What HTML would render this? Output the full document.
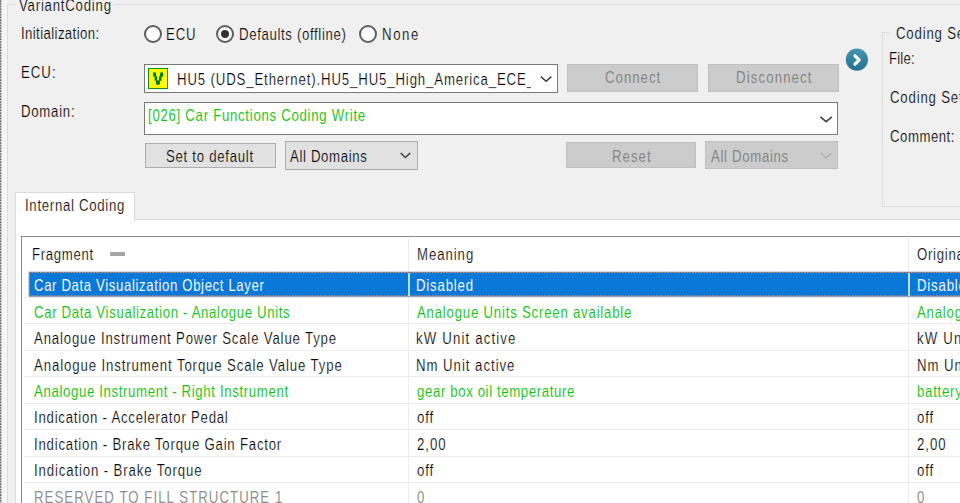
<!DOCTYPE html>
<html><head><meta charset="utf-8">
<style>
html,body{margin:0;padding:0}
body{width:960px;height:503px;overflow:hidden;background:#f0f0f0;position:relative;font-family:"Liberation Sans",sans-serif}
.a{position:absolute;box-sizing:border-box}
.t{position:absolute;font-size:16.5px;line-height:20px;white-space:nowrap;transform-origin:0 0}
.radio{position:absolute;box-sizing:border-box;width:18px;height:18px;border-radius:50%;border:2px solid #5e5e5e;background:#fff}
.chev{position:absolute}
</style></head><body>
<!-- left dotted border -->
<svg class="a" style="left:0;top:0" width="2" height="503"><defs><pattern id="dots" patternUnits="userSpaceOnUse" width="2" height="2.73"><rect x="0" y="0" width="2" height="2.73" fill="#d8d8d8"/><rect x="0" y="0.4" width="1.7" height="1.4" fill="#505050"/></pattern></defs><rect x="0" y="0" width="1.7" height="503" fill="url(#dots)"/><rect x="1.7" y="0" width="0.3" height="503" fill="#f5f5f5"/></svg>
<div class="a" style="left:1.6px;top:0;width:5.5px;height:503px;background:#f5f5f5"></div>
<!-- VariantCoding groupbox -->
<div class="a" style="left:6.5px;top:4.4px;width:1000px;height:600px;border:1px solid #dcdcdc"></div>
<div class="a" style="left:16px;top:0;width:98px;height:14px;background:#f0f0f0"></div>
<!-- radios -->
<div class="radio" style="left:143.5px;top:25px"></div>
<div class="radio" style="left:215.9px;top:25px"><div class="a" style="left:2.7px;top:2.7px;width:8.6px;height:8.6px;border-radius:50%;background:#333"></div></div>
<div class="radio" style="left:359.35px;top:25px"></div>
<!-- ECU combo -->
<div class="a" style="left:144px;top:64px;width:414px;height:29px;border:1px solid #7a7a7a;background:#fff"></div>
<div class="a" style="left:147.9px;top:68.2px;width:20.4px;height:20.5px;border:1.6px solid #109010;background:#ffff00"></div>
<svg class="a" style="left:144px;top:64px" width="30" height="30" viewBox="144 64 30 30"><g fill="#007800"><rect x="153.1" y="72.5" width="3" height="4.2"/><rect x="154.6" y="76.3" width="2.6" height="4.5"/><rect x="156" y="80.4" width="3.8" height="4.3"/><rect x="159" y="76.3" width="2.5" height="4.5"/><rect x="160.1" y="72.5" width="3" height="4.2"/></g></svg>
<!-- Connect / Disconnect -->
<div class="a" style="left:567px;top:64px;width:131px;height:27.5px;border:1px solid #bfbfbf;background:#cccccc"></div>
<div class="a" style="left:708px;top:64px;width:130.5px;height:27.5px;border:1px solid #bfbfbf;background:#cccccc"></div>
<!-- blue circle -->
<svg class="a" style="left:845px;top:48px" width="24" height="24" viewBox="0 0 24 24">
<defs><linearGradient id="bg1" x1="0" y1="0" x2="0" y2="1"><stop offset="0" stop-color="#4696b0"/><stop offset="1" stop-color="#23708e"/></linearGradient></defs>
<circle cx="11.9" cy="11.6" r="11.1" fill="url(#bg1)"/>
<path d="M10 7.8 L14.2 11.9 L10 16.2" fill="none" stroke="#fff" stroke-width="3.2" stroke-linecap="round" stroke-linejoin="round"/>
</svg>
<!-- Coding Set groupbox -->
<div class="a" style="left:882px;top:32px;width:200px;height:175px;border:1px solid #dcdcdc"></div>
<div class="a" style="left:891px;top:24px;width:100px;height:16px;background:#f0f0f0"></div>
<!-- Domain combo -->
<div class="a" style="left:144px;top:102px;width:694px;height:33px;border:1px solid #7a7a7a;background:#fff"></div>
<!-- Set to default -->
<div class="a" style="left:145px;top:142.5px;width:131px;height:25.5px;border:1px solid #adadad;background:#e1e1e1"></div>
<!-- All Domains combo -->
<div class="a" style="left:284.5px;top:141.2px;width:133.5px;height:28.5px;border:1px solid #adadad;background:#e1e1e1"></div>
<!-- Reset -->
<div class="a" style="left:565.6px;top:142.2px;width:130.6px;height:26px;border:1px solid #bfbfbf;background:#cccccc"></div>
<!-- All Domains 2 -->
<div class="a" style="left:705.3px;top:140.6px;width:132.8px;height:28.8px;border:1px solid #bfbfbf;background:#cccccc"></div>
<!-- Tab panel -->
<div class="a" style="left:14.5px;top:219.2px;width:1000px;height:400px;border:1px solid #d9d9d9;background:#fff"></div>
<div class="a" style="left:14.5px;top:191.7px;width:120px;height:29px;border:1px solid #d9d9d9;border-bottom:none;background:#fff"></div>
<!-- grid -->
<div class="a" style="left:21px;top:235.5px;width:1000px;height:400px;border:1.5px solid #868a92;border-right:none;border-bottom:none;background:#fff"></div>
<div class="a" style="left:408px;top:239px;width:1px;height:264px;background:#ececec"></div>
<div class="a" style="left:908px;top:239px;width:1px;height:264px;background:#ececec"></div>
<div class="a" style="left:110.2px;top:252px;width:15px;height:4.4px;background:#a6a6a6"></div>
<div class="a" style="left:24px;top:297.00px;width:940px;height:1px;background:#ececec"></div>
<div class="a" style="left:24px;top:323.43px;width:940px;height:1px;background:#ececec"></div>
<div class="a" style="left:24px;top:349.86px;width:940px;height:1px;background:#ececec"></div>
<div class="a" style="left:24px;top:376.29px;width:940px;height:1px;background:#ececec"></div>
<div class="a" style="left:24px;top:402.72px;width:940px;height:1px;background:#ececec"></div>
<div class="a" style="left:24px;top:429.15px;width:940px;height:1px;background:#ececec"></div>
<div class="a" style="left:24px;top:455.58px;width:940px;height:1px;background:#ececec"></div>
<div class="a" style="left:24px;top:482.01px;width:940px;height:1px;background:#ececec"></div>
<!-- selected row -->
<svg class="a" style="left:0;top:0" width="960" height="503"><defs>
<pattern id="dh" patternUnits="userSpaceOnUse" x="28.75" y="0" width="2.8" height="4"><rect x="0" y="0" width="1.5" height="4" fill="#e8905a"/></pattern>
<pattern id="dv" patternUnits="userSpaceOnUse" x="0" y="271.8" width="4" height="2.8"><rect x="0" y="0" width="4" height="1.5" fill="#e8905a"/></pattern></defs>
<rect x="28.75" y="271.8" width="940" height="24.8" fill="#0a78d7"/>
<rect x="28.75" y="271.8" width="940" height="1.3" fill="url(#dh)"/>
<rect x="28.75" y="295.3" width="940" height="1.3" fill="url(#dh)"/>
<rect x="28.75" y="271.8" width="1.3" height="24.8" fill="url(#dv)"/>
</svg>
<div class="a" style="left:408.3px;top:273px;width:1.5px;height:22.5px;background:#c0dcf4"></div>
<div class="a" style="left:908.3px;top:273px;width:1.5px;height:22.5px;background:#c0dcf4"></div>
<div class="t" style="left:19.40px;top:-5.12px;color:#000;transform:scaleX(0.8);letter-spacing:0.971px;-webkit-text-stroke:0.22px #f0f0f0;">VariantCoding</div>
<div class="t" style="left:21.10px;top:23.03px;color:#000;transform:scaleX(0.8);letter-spacing:0.489px;-webkit-text-stroke:0.22px #f0f0f0;">Initialization:</div>
<div class="t" style="left:20.90px;top:61.58px;color:#000;transform:scaleX(0.8);letter-spacing:1.263px;-webkit-text-stroke:0.22px #f0f0f0;">ECU:</div>
<div class="t" style="left:20.90px;top:100.78px;color:#000;transform:scaleX(0.8);letter-spacing:0.920px;-webkit-text-stroke:0.22px #f0f0f0;">Domain:</div>
<div class="t" style="left:166.10px;top:23.88px;color:#000;transform:scaleX(0.8);letter-spacing:1.102px;-webkit-text-stroke:0.22px #f0f0f0;">ECU</div>
<div class="t" style="left:238.50px;top:23.98px;color:#000;transform:scaleX(0.8);letter-spacing:0.811px;-webkit-text-stroke:0.22px #f0f0f0;">Defaults (offline)</div>
<div class="t" style="left:381.80px;top:23.98px;color:#000;transform:scaleX(0.8);letter-spacing:1.994px;-webkit-text-stroke:0.22px #f0f0f0;">None</div>
<div class="t" style="left:176.70px;top:68.98px;color:#000;transform:scaleX(0.8);letter-spacing:1.080px;-webkit-text-stroke:0.22px #fff;">HU5 (UDS_Ethernet).HU5_HU5_High_America_ECE_</div>
<div class="t" style="left:605.30px;top:67.18px;color:#838383;transform:scaleX(0.8);letter-spacing:1.251px;-webkit-text-stroke:0.08px #cccccc;">Connect</div>
<div class="t" style="left:735.70px;top:67.18px;color:#838383;transform:scaleX(0.8);letter-spacing:1.412px;-webkit-text-stroke:0.08px #cccccc;">Disconnect</div>
<div class="t" style="left:895.50px;top:23.08px;color:#000;transform:scaleX(0.8);letter-spacing:1.026px;-webkit-text-stroke:0.22px #f0f0f0;">Coding Set</div>
<div class="t" style="left:889.10px;top:48.18px;color:#000;transform:scaleX(0.8);letter-spacing:0.228px;-webkit-text-stroke:0.22px #f0f0f0;">File:</div>
<div class="t" style="left:889.50px;top:87.08px;color:#000;transform:scaleX(0.8);letter-spacing:1.026px;-webkit-text-stroke:0.22px #f0f0f0;">Coding Set</div>
<div class="t" style="left:889.50px;top:126.08px;color:#000;transform:scaleX(0.8);letter-spacing:0.640px;-webkit-text-stroke:0.22px #f0f0f0;">Comment:</div>
<div class="t" style="left:147.95px;top:105.28px;color:#14c214;transform:scaleX(0.8);letter-spacing:0.898px;-webkit-text-stroke:0.08px #fff;">[026] Car Functions Coding Write</div>
<div class="t" style="left:166.25px;top:146.03px;color:#000;transform:scaleX(0.8);letter-spacing:0.902px;-webkit-text-stroke:0.22px #e1e1e1;">Set to default</div>
<div class="t" style="left:290.00px;top:145.98px;color:#000;transform:scaleX(0.8);letter-spacing:0.810px;-webkit-text-stroke:0.22px #e1e1e1;">All Domains</div>
<div class="t" style="left:611.70px;top:145.98px;color:#838383;transform:scaleX(0.8);letter-spacing:1.277px;-webkit-text-stroke:0.08px #cccccc;">Reset</div>
<div class="t" style="left:710.60px;top:145.98px;color:#838383;transform:scaleX(0.8);letter-spacing:0.835px;-webkit-text-stroke:0.08px #cccccc;">All Domains</div>
<div class="t" style="left:25.00px;top:194.58px;color:#000;transform:scaleX(0.8);letter-spacing:0.876px;-webkit-text-stroke:0.22px #fff;">Internal Coding</div>
<div class="t" style="left:32.00px;top:244.48px;color:#000;transform:scaleX(0.8);letter-spacing:0.836px;-webkit-text-stroke:0.22px #fff;">Fragment</div>
<div class="t" style="left:416.60px;top:244.48px;color:#000;transform:scaleX(0.8);letter-spacing:1.165px;-webkit-text-stroke:0.22px #fff;">Meaning</div>
<div class="t" style="left:917.40px;top:244.48px;color:#000;transform:scaleX(0.8);letter-spacing:0.903px;-webkit-text-stroke:0.22px #fff;">Original</div>
<div class="t" style="left:34.30px;top:275.28px;color:#fff;transform:scaleX(0.8);letter-spacing:0.773px;-webkit-text-stroke:0.08px #0a78d7;">Car Data Visualization Object Layer</div>
<div class="t" style="left:416.40px;top:275.28px;color:#fff;transform:scaleX(0.8);letter-spacing:1.013px;-webkit-text-stroke:0.08px #0a78d7;">Disabled</div>
<div class="t" style="left:916.60px;top:275.28px;color:#fff;transform:scaleX(0.8);letter-spacing:1.013px;-webkit-text-stroke:0.08px #0a78d7;">Disabled</div>
<div class="t" style="left:34.30px;top:301.71px;color:#14c214;transform:scaleX(0.8);letter-spacing:0.815px;-webkit-text-stroke:0.08px #fff;">Car Data Visualization - Analogue Units</div>
<div class="t" style="left:417.20px;top:301.71px;color:#14c214;transform:scaleX(0.8);letter-spacing:0.983px;-webkit-text-stroke:0.08px #fff;">Analogue Units Screen available</div>
<div class="t" style="left:917.40px;top:301.71px;color:#14c214;transform:scaleX(0.8);letter-spacing:0.983px;-webkit-text-stroke:0.08px #fff;">Analogue Units Screen available</div>
<div class="t" style="left:34.30px;top:328.14px;color:#000;transform:scaleX(0.8);letter-spacing:1.037px;-webkit-text-stroke:0.22px #fff;">Analogue Instrument Power Scale Value Type</div>
<div class="t" style="left:416.40px;top:328.14px;color:#000;transform:scaleX(0.8);letter-spacing:1.451px;-webkit-text-stroke:0.22px #fff;">kW Unit active</div>
<div class="t" style="left:916.60px;top:328.14px;color:#000;transform:scaleX(0.8);letter-spacing:1.451px;-webkit-text-stroke:0.22px #fff;">kW Unit active</div>
<div class="t" style="left:34.30px;top:354.57px;color:#000;transform:scaleX(0.8);letter-spacing:1.104px;-webkit-text-stroke:0.22px #fff;">Analogue Instrument Torque Scale Value Type</div>
<div class="t" style="left:416.40px;top:354.57px;color:#000;transform:scaleX(0.8);letter-spacing:1.214px;-webkit-text-stroke:0.22px #fff;">Nm Unit active</div>
<div class="t" style="left:916.60px;top:354.57px;color:#000;transform:scaleX(0.8);letter-spacing:1.214px;-webkit-text-stroke:0.22px #fff;">Nm Unit active</div>
<div class="t" style="left:34.30px;top:381.00px;color:#14c214;transform:scaleX(0.8);letter-spacing:0.800px;-webkit-text-stroke:0.08px #fff;">Analogue Instrument - Right Instrument</div>
<div class="t" style="left:417.20px;top:381.00px;color:#14c214;transform:scaleX(0.8);letter-spacing:0.778px;-webkit-text-stroke:0.08px #fff;">gear box oil temperature</div>
<div class="t" style="left:916.60px;top:381.00px;color:#14c214;transform:scaleX(0.8);letter-spacing:0.941px;-webkit-text-stroke:0.08px #fff;">battery</div>
<div class="t" style="left:33.50px;top:407.43px;color:#000;transform:scaleX(0.8);letter-spacing:0.953px;-webkit-text-stroke:0.22px #fff;">Indication - Accelerator Pedal</div>
<div class="t" style="left:417.20px;top:407.43px;color:#000;transform:scaleX(0.8);letter-spacing:1.039px;-webkit-text-stroke:0.22px #fff;">off</div>
<div class="t" style="left:917.40px;top:407.43px;color:#000;transform:scaleX(0.8);letter-spacing:1.039px;-webkit-text-stroke:0.22px #fff;">off</div>
<div class="t" style="left:33.50px;top:433.86px;color:#000;transform:scaleX(0.8);letter-spacing:0.976px;-webkit-text-stroke:0.22px #fff;">Indication - Brake Torque Gain Factor</div>
<div class="t" style="left:417.20px;top:433.86px;color:#000;transform:scaleX(0.8);letter-spacing:1.198px;-webkit-text-stroke:0.22px #fff;">2,00</div>
<div class="t" style="left:917.40px;top:433.86px;color:#000;transform:scaleX(0.8);letter-spacing:1.198px;-webkit-text-stroke:0.22px #fff;">2,00</div>
<div class="t" style="left:33.50px;top:460.29px;color:#000;transform:scaleX(0.8);letter-spacing:1.093px;-webkit-text-stroke:0.22px #fff;">Indication - Brake Torque</div>
<div class="t" style="left:417.20px;top:460.29px;color:#000;transform:scaleX(0.8);letter-spacing:1.039px;-webkit-text-stroke:0.22px #fff;">off</div>
<div class="t" style="left:917.40px;top:460.29px;color:#000;transform:scaleX(0.8);letter-spacing:1.039px;-webkit-text-stroke:0.22px #fff;">off</div>
<div class="t" style="left:33.50px;top:486.72px;color:#8a8a8a;transform:scaleX(0.8);letter-spacing:1.331px;-webkit-text-stroke:0.08px #fff;">RESERVED TO FILL STRUCTURE 1</div>
<div class="t" style="left:417.20px;top:486.72px;color:#8a8a8a;transform:scaleX(0.8);letter-spacing:0.000px;-webkit-text-stroke:0.08px #fff;">0</div>
<div class="t" style="left:917.40px;top:486.72px;color:#8a8a8a;transform:scaleX(0.8);letter-spacing:0.000px;-webkit-text-stroke:0.08px #fff;">0</div>
<!-- overlays -->
<div class="a" style="left:531px;top:65px;width:26px;height:27px;background:#fff"></div>
<svg class="a" style="left:538px;top:72px" width="16" height="12" viewBox="0 0 16 12"><path d="M2.9 4.7 L8.1 9.3 L13.4 4.7" fill="none" stroke="#444" stroke-width="1.6"/></svg>
<svg class="a" style="left:818px;top:112px" width="16" height="12" viewBox="0 0 16 12"><path d="M2.4 4.9 L8.1 9.7 L13.8 4.9" fill="none" stroke="#444" stroke-width="1.6"/></svg>
<svg class="a" style="left:398px;top:148px" width="16" height="12" viewBox="0 0 16 12"><path d="M2.6 5 L7.4 9.5 L12.2 5" fill="none" stroke="#444" stroke-width="1.6"/></svg>
<svg class="a" style="left:818px;top:148px" width="16" height="12" viewBox="0 0 16 12"><path d="M2.6 5 L8.1 9.9 L13.6 5" fill="none" stroke="#b0b0b0" stroke-width="1.5"/></svg>
</body></html>
